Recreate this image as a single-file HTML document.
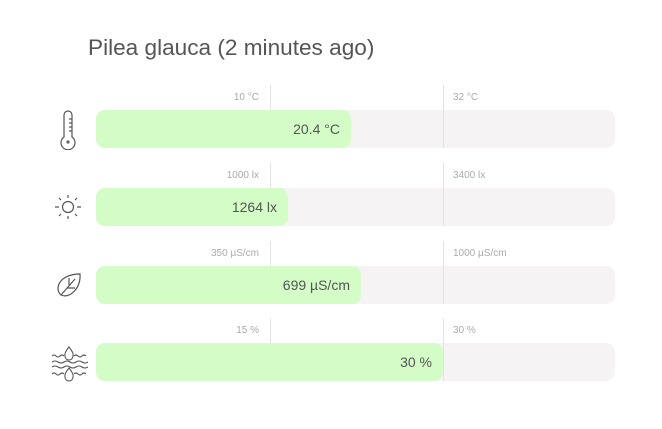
<!DOCTYPE html>
<html><head><style>
body{margin:0;width:662px;height:429px;background:#fff;font-family:"Liberation Sans",sans-serif;position:relative;overflow:hidden}
.t{position:absolute;left:88px;top:35px;font-size:22.6px;color:#555}
.row{position:absolute;left:0;width:662px;height:78px}
.bar{position:absolute;left:96px;top:27px;width:519px;height:38px;background:#f5f3f4;border-radius:9px}
.fill{position:absolute;left:96px;top:27px;height:38px;background:#d3fcc6;border-radius:9px;box-sizing:border-box;text-align:right;padding-right:11px;line-height:38px;font-size:14px;color:#555}
.vl{position:absolute;top:2px;height:63px;width:1px;background:#e4e2e3}
.lb{position:absolute;top:9px;font-size:10px;color:#aaa}
.ic{position:absolute}
</style></head><body>
<div class="t">Pilea glauca (2 minutes ago)</div>

<div class="row" style="top:83px">
<div class="bar"></div>
<div class="vl" style="left:270px"></div><div class="vl" style="left:443px"></div>
<div class="fill" style="width:255px">20.4 °C</div>
<div class="lb" style="right:403px">10 °C</div><div class="lb" style="left:453px">32 °C</div>
<svg class="ic" style="left:50px;top:27px" width="36" height="40" viewBox="0 0 36 40" fill="none" stroke="#555" stroke-width="1.2"><path d="M14 5a4 4 0 0 1 8 0v22a7 7 0 1 1-8 0z"/><path d="M22 9h-3M22 13h-3M22 17h-3M22 21h-3"/><circle cx="18" cy="32" r="1"/></svg>
</div>

<div class="row" style="top:161px">
<div class="bar"></div>
<div class="vl" style="left:270px"></div><div class="vl" style="left:443px"></div>
<div class="fill" style="width:192px">1264 lx</div>
<div class="lb" style="right:403px">1000 lx</div><div class="lb" style="left:453px">3400 lx</div>
<svg class="ic" style="left:50px;top:28px" width="36" height="36" viewBox="0 0 36 36" fill="none" stroke="#555" stroke-width="1.2"><circle cx="18" cy="18" r="5.5"/><path d="M18 6v3M18 27v3M5 18h4M27 18h4M9 9l2 2M25 25l2 2M27 9l-2 2M11 25l-2 2"/></svg>
</div>

<div class="row" style="top:239px">
<div class="bar"></div>
<div class="vl" style="left:270px"></div><div class="vl" style="left:443px"></div>
<div class="fill" style="width:265px">699 µS/cm</div>
<div class="lb" style="right:403px">350 µS/cm</div><div class="lb" style="left:453px">1000 µS/cm</div>
<svg class="ic" style="left:50px;top:28px" width="36" height="36" viewBox="0 0 36 36" fill="none" stroke="#555" stroke-width="1.2"><path d="M11 28C4 22 9 7 30 7c1 14-10 25-19 21z"/><path d="M11 28L25 12M17 21h8M19 18v-7"/></svg>
</div>

<div class="row" style="top:316px">
<div class="bar"></div>
<div class="vl" style="left:270px"></div><div class="vl" style="left:443px"></div>
<div class="fill" style="width:347px">30 %</div>
<div class="lb" style="right:403px">15 %</div><div class="lb" style="left:453px">30 %</div>
<svg class="ic" style="left:50px;top:28px" width="38" height="38" viewBox="0 0 38 38" fill="none" stroke="#555" stroke-width="1.1"><path d="M2 12q2-2 4 0t4 0t4 0M24 12q2-2 4 0t4 0t4 0M2 18q3-2 6 0t6 0t6 0t6 0t6 0t6 0M2 23q3-2 6 0t6 0t6 0t6 0t6 0t6 0M2 30q2-2 4 0t4 0t4 0M24 30q2-2 4 0t4 0t4 0"/><path d="M19 3q-5 6-4 9a4 4 0 0 0 8 0q1-3-4-9zM19 24q-5 6-4 9a4 4 0 0 0 8 0q1-3-4-9z"/></svg>
</div>
</body></html>
